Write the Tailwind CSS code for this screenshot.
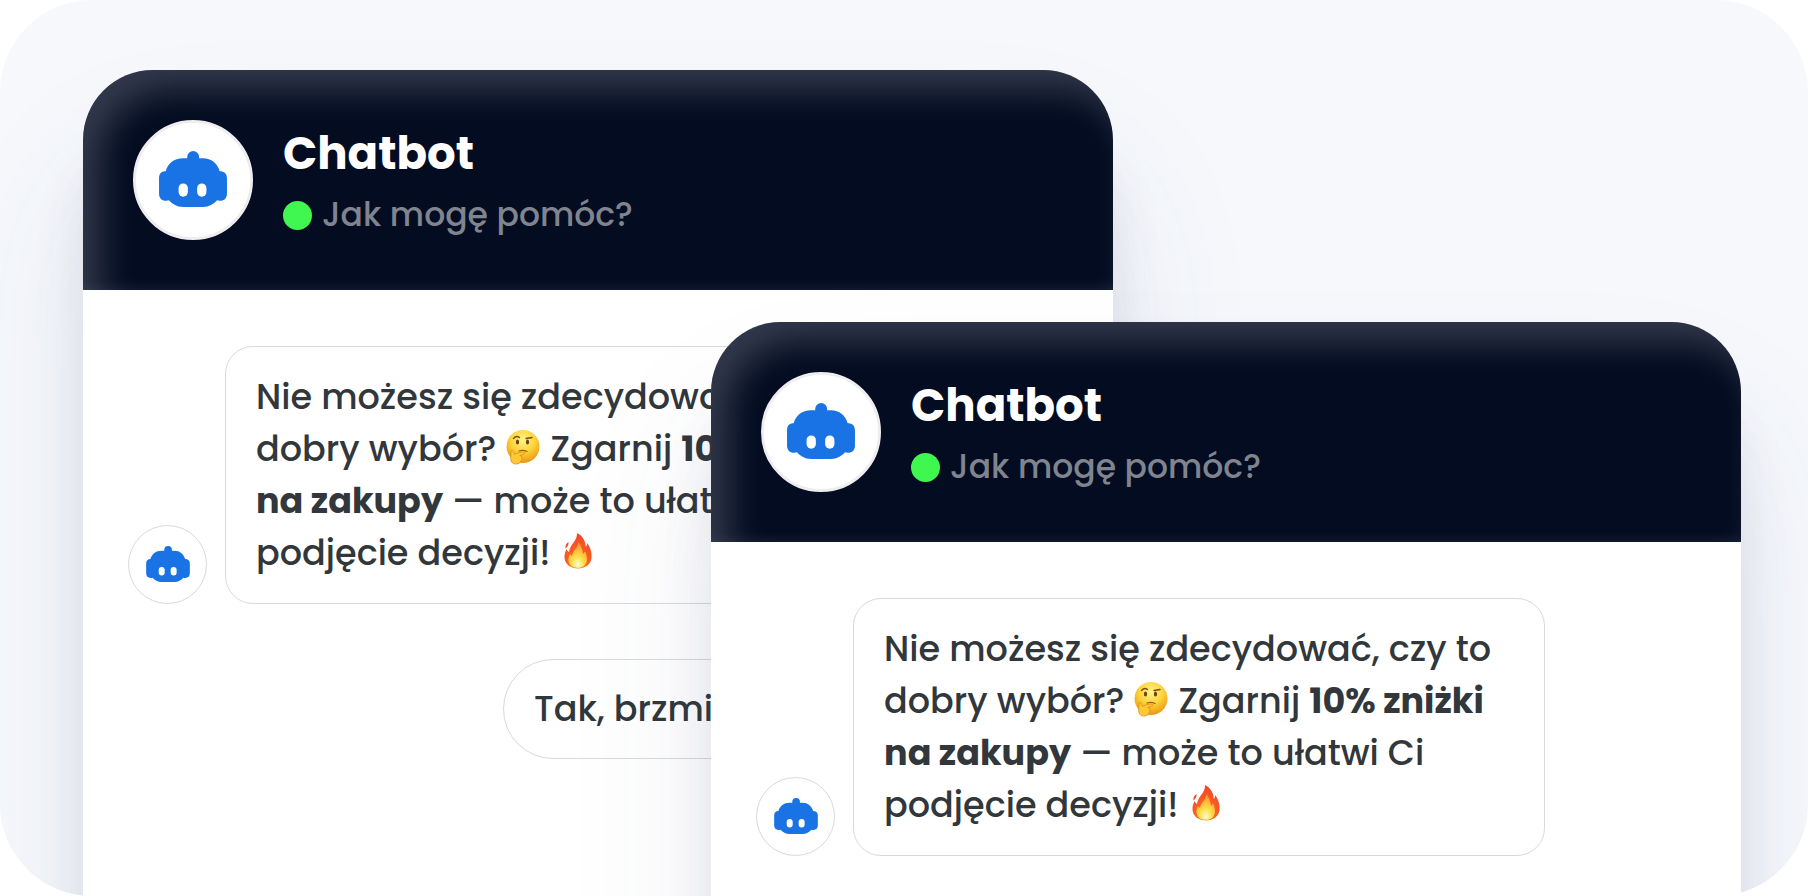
<!DOCTYPE html>
<html lang="pl">
<head>
<meta charset="utf-8">
<meta name="viewport" content="width=device-width, initial-scale=1">
<title>Chatbot</title>
<script src="https://cdn.jsdelivr.net/npm/@tailwindcss/browser@4"></script>
</head>
<body class="bg-white font-['Poppins','Inter',sans-serif] font-medium text-[#31373b]">
<svg class="absolute size-0" aria-hidden="true">
  <defs>
    <symbol id="bot" viewBox="0 0 205 169">
      <path fill="#1a73e4" d="M85 22V18a18 18 0 0 1 36 0v4h12c24 0 44 16 50 39 14 0 22 8 22 21v46c0 14-8 22-21 22-4 0-7 0-9-1-11 12-24 20-42 20H72c-18 0-31-8-42-20-2 1-5 1-9 1C8 150 0 142 0 128V82c0-13 7-21 20-21 6-23 26-39 52-39Z"/>
      <rect x="59" y="98" width="28" height="40" rx="14" fill="#fff"/>
      <rect x="115" y="98" width="28" height="40" rx="14" fill="#fff"/>
    </symbol>
    <radialGradient id="skin" cx=".5" cy=".3" r=".72"><stop offset="0" stop-color="#fff48a"/><stop offset=".5" stop-color="#fdd43a"/><stop offset="1" stop-color="#ea9210"/></radialGradient>
    <radialGradient id="flameOut" cx=".5" cy=".85" r=".9"><stop offset="0" stop-color="#ffa526"/><stop offset=".4" stop-color="#fb6022"/><stop offset="1" stop-color="#f0402c"/></radialGradient>
    <radialGradient id="flameIn" cx=".5" cy=".88" r=".85"><stop offset="0" stop-color="#fffbe0"/><stop offset=".35" stop-color="#ffe34a"/><stop offset="1" stop-color="#ff8f2e"/></radialGradient>
    <symbol id="thinking" viewBox="0 0 36 36">
      <circle cx="18" cy="17.500" r="16.500" fill="url(#skin)"/>
      <path d="M8.500 9.500q3-3.500 6-1M21 9.500l6-1" fill="none" stroke="#7a4a10" stroke-width="1.300" stroke-linecap="round"/>
      <ellipse cx="12.500" cy="13" rx="1.600" ry="2.500" fill="#6b4212"/><ellipse cx="22.500" cy="13" rx="1.600" ry="2.500" fill="#6b4212"/>
      <path d="M14 22q4-1.500 8 .5" fill="none" stroke="#9b5d14" stroke-width="1.200" stroke-linecap="round"/>
      <path d="M6 22c1.500-1 2.500 0 2.800 1.500l.7 2c3-1.500 6-2.700 9-2.500 1.800.1 1.700 2 .2 2.300l-4 1.200c2 .3 2.500 1.500 2 2.700.5 1-.1 2-.8 2.500 0 2.300-3 3.500-5 3.300-4 0-5.500-3-5.200-7Z" fill="#fdc936" stroke="#e08d14" stroke-width=".8"/>
    </symbol>
    <symbol id="fire" viewBox="0 0 28 36">
      <path fill="url(#flameOut)" d="M13 0c6 3 8.500 8 8.700 14 .9-1 1.500-2.200 1.600-4 3 4.500 4.700 9.500 4.200 14.500C27 31.500 21 35.500 14 35.500S.8 31.500.5 24.500C.3 21 1.500 18.500 2.500 16c.7 1.600 1.500 2.500 2.500 3C6 11 13.500 8 13 0ZM4.500 9C5 12 3.500 14 1.500 15.500 1 12.500 2 10.500 4.500 9Z"/>
      <path fill="url(#flameIn)" d="M14.500 9c3 4 4 8 4.500 12 1-.8 1.700-2 2-3 2.500 6 3 11-.5 14.500-3 3-10 3-13.500.2C3.500 29.500 4 25 6 20.500c.5 1.500 1 2 2 2.500C9 17 14 15 14.500 9Z"/>
    </symbol>
  </defs>
</svg>

<main class="grid h-screen min-h-[600px] grid-cols-1 grid-rows-1 overflow-hidden rounded-[92px] bg-[#f6f8fc] pr-[67px] pl-[83px]">

  <section aria-label="Chatbot" class="col-start-1 row-start-1 mt-[70px] -mb-60 w-[62.12%] rounded-t-[70px] bg-white shadow-[0_100px_160px_rgba(70,80,120,0.09),0_80px_50px_rgba(70,75,120,0.12)]">
    <header class="flex h-[220px] items-center gap-[30px] rounded-t-[70px] bg-[#040c22] px-[50px] shadow-[inset_18px_20px_34px_rgba(255,255,255,0.19),inset_0_-8px_14px_-8px_rgba(255,255,255,0.08)]">
      <span class="flex size-[120px] shrink-0 items-center justify-center rounded-full border-3 border-[#eeeeef] bg-white pb-[2px]"><svg class="h-14 w-17" aria-hidden="true"><use href="#bot"/></svg></span>
      <div class="flex flex-col gap-1 pt-[6px]">
        <h2 class="text-[45px] leading-[60px] font-bold text-white">Chatbot</h2>
        <p class="flex items-center gap-[10px] text-[33px] leading-[54px] whitespace-nowrap text-[#80848e]"><span class="size-[29px] rounded-full bg-[#3ff74f]"></span>Jak mogę pomóc?</p>
      </div>
    </header>
    <div class="flex flex-col gap-[55px] px-[45px] pt-14">
      <div class="flex items-end gap-[18px]">
        <span class="flex size-[79px] shrink-0 items-center justify-center rounded-full border border-[#d8d8df] bg-white pb-[2px]"><svg class="h-9 w-11" aria-hidden="true"><use href="#bot"/></svg></span>
        <p class="rounded-[28px] border border-[#d8d8df] py-6 pr-[53px] pl-[30px] text-[35px] leading-[52px] whitespace-nowrap">Nie możesz się zdecydować, czy to<br>dobry wybór? <svg class="inline-block size-9 align-[-4px]" role="img" aria-label="🤔"><use href="#thinking"/></svg> Zgarnij <b>10% zniżki</b><br><b>na zakupy</b> — może to ułatwi Ci<br>podjęcie decyzji! <svg class="inline-block h-9 w-9 align-[-4px]" role="img" aria-label="🔥"><use href="#fire"/></svg></p>
      </div>
      <button type="button" class="ml-[375px] h-[100px] rounded-full border border-[#d8d8df] px-[30px] text-left text-[35px] leading-[52px] whitespace-nowrap">Tak, brzmi</button>
    </div>
  </section>

  <section aria-label="Chatbot" class="z-10 col-start-1 row-start-1 mt-[322px] -mb-60 w-[62.12%] justify-self-end rounded-t-[70px] bg-white shadow-[0_100px_160px_rgba(70,80,120,0.09),0_80px_50px_rgba(70,75,120,0.12)]">
    <header class="flex h-[220px] items-center gap-[30px] rounded-t-[70px] bg-[#040c22] px-[50px] shadow-[inset_18px_20px_34px_rgba(255,255,255,0.19),inset_0_-8px_14px_-8px_rgba(255,255,255,0.08)]">
      <span class="flex size-[120px] shrink-0 items-center justify-center rounded-full border-3 border-[#eeeeef] bg-white pb-[2px]"><svg class="h-14 w-17" aria-hidden="true"><use href="#bot"/></svg></span>
      <div class="flex flex-col gap-1 pt-[6px]">
        <h2 class="text-[45px] leading-[60px] font-bold text-white">Chatbot</h2>
        <p class="flex items-center gap-[10px] text-[33px] leading-[54px] whitespace-nowrap text-[#80848e]"><span class="size-[29px] rounded-full bg-[#3ff74f]"></span>Jak mogę pomóc?</p>
      </div>
    </header>
    <div class="flex flex-col gap-[55px] px-[45px] pt-14">
      <div class="flex items-end gap-[18px]">
        <span class="flex size-[79px] shrink-0 items-center justify-center rounded-full border border-[#d8d8df] bg-white pb-[2px]"><svg class="h-9 w-11" aria-hidden="true"><use href="#bot"/></svg></span>
        <p class="rounded-[28px] border border-[#d8d8df] py-6 pr-[53px] pl-[30px] text-[35px] leading-[52px] whitespace-nowrap">Nie możesz się zdecydować, czy to<br>dobry wybór? <svg class="inline-block size-9 align-[-4px]" role="img" aria-label="🤔"><use href="#thinking"/></svg> Zgarnij <b>10% zniżki</b><br><b>na zakupy</b> — może to ułatwi Ci<br>podjęcie decyzji! <svg class="inline-block h-9 w-9 align-[-4px]" role="img" aria-label="🔥"><use href="#fire"/></svg></p>
      </div>
    </div>
  </section>
</main>
</body>
</html>
